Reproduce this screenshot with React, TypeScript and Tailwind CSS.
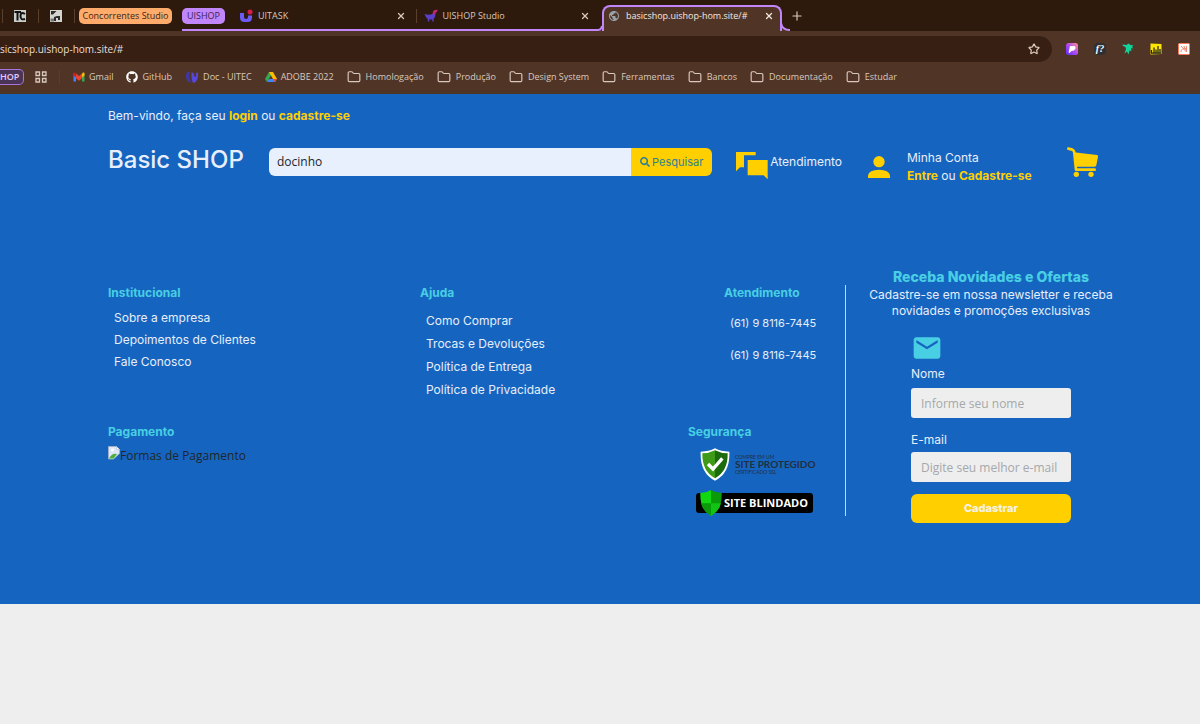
import React, { useState } from 'react'
import { MdEmail, MdPublic } from 'react-icons/md'
import { FaGithub, FaSearch } from 'react-icons/fa'
import { Folder, Plus, Star, X } from 'lucide-react'

const folders = [
  'Homologação',
  'Produção',
  'Design System',
  'Ferramentas',
  'Bancos',
  'Documentação',
  'Estudar'
]

const institutional = ['Sobre a empresa', 'Depoimentos de Clientes', 'Fale Conosco']

const help = ['Como Comprar', 'Trocas e Devoluções', 'Política de Entrega', 'Política de Privacidade']

const phones = ['(61) 9 8116-7445', '(61) 9 8116-7445']

const Separator = () => <span className="h-3.5 w-px shrink-0 bg-[#5a3f2f]" />

const GmailIcon = () => (
  <svg className="h-3 w-3" viewBox="0 0 24 24">
    <path d="M1 21V5l5 4v12z" fill="#4285f4" />
    <path d="M18 21V9l5-4v16z" fill="#34a853" />
    <path d="M6 15V5l6 5 6-5v10l-6 5z" fill="#ea4335" />
    <path d="M6 15l6 5 6-5v6H6z" fill="#503527" />
    <path d="M1 5q0-3 3-2l2 2v8L1 9z" fill="#c5221f" />
    <path d="M23 5q0-3-3-2l-2 2v8l5-4z" fill="#fbbc04" />
  </svg>
)

const AppsIcon = () => (
  <svg className="ml-[11px] h-3 w-3" viewBox="0 0 24 24" fill="none" stroke="currentColor" strokeWidth="2.6">
    <path d="M2 2h7v7H2zM15 2h7v7h-7zM2 15h7v7H2zM15 15h7v7h-7z" />
  </svg>
)

const DocIcon = () => (
  <svg className="h-3.5 w-3.5" viewBox="0 0 28 28">
    <path d="M3 6q3-4 7-3-3 8 2 22Q2 24 2 13z" fill="#4136a8" />
    <path d="M13 5q4-1 5 3 0 6 3 6 2-1 1-8l4-1q2 17-9 21-5-4-4-21z" fill="#5648dc" />
  </svg>
)

const DriveIcon = () => (
  <svg className="h-3 w-3" viewBox="0 0 24 24">
    <path d="M8 2h8l-4 7-8 13-4-6z" fill="#34a853" />
    <path d="M8 2h8l8 14h-8z" fill="#fbbc04" />
    <path d="M8 16h16l-4 6H4z" fill="#4285f4" />
    <path d="M16 16h8l-4 6z" fill="#ea4335" />
  </svg>
)

const TaskIcon = () => (
  <svg className="h-3.5 w-3.5" viewBox="0 0 28 28">
    <path d="M2 8h8v8q0 4 4 4t4-4v-3h8v4q0 9-9 9h-6q-9 0-9-9z" fill="#6c5cf5" />
    <circle cx="22" cy="6" r="5" fill="#d81b4a" />
  </svg>
)

const StudioIcon = () => (
  <svg className="h-3.5 w-3.5" viewBox="0 0 28 28">
    <path d="M1 10q9 3 16 0l3-6h4l-2 12q-3 6-9 5Q5 22 1 10z" fill="#5b3fc8" />
    <path d="M19 3l8-2-1 5-4 1-1 5-4-2z" fill="#c2276f" />
    <path d="M9 20v5M18 20v5" stroke="#5b3fc8" strokeWidth="3" />
  </svg>
)

const ChatIcon = () => (
  <svg className="h-7 w-8 shrink-0" viewBox="0 0 96 84" fill="#ffcf00">
    <path d="M0 0h59v10H24v36H12L0 58z" />
    <path d="M35 24h60v58L83 70H35z" />
  </svg>
)

const PersonIcon = () => (
  <svg className="h-[22px] w-[22px] shrink-0" viewBox="0 0 66 66" fill="#ffcf00">
    <circle cx="33" cy="17" r="17" />
    <path d="M0 66V58Q3 42 33 41q30 1 33 17v8z" />
  </svg>
)

const CartIcon = () => (
  <svg className="h-[30px] w-8" viewBox="0 0 96 90" fill="#ffcf00">
    <path d="M4 5l12 3q6 2 6 10l5 50h56" fill="none" stroke="#ffcf00" strokeWidth="8" strokeLinecap="round" strokeLinejoin="round" />
    <path d="M20 16l70 8q4 1 3 5l-5 26q-1 4-5 4H26z" />
    <circle cx="28" cy="82" r="8" />
    <circle cx="72" cy="82" r="8" />
  </svg>
)

const BrokenImageIcon = () => (
  <svg className="h-3.5 w-3 shrink-0" viewBox="0 0 24 28">
    <path d="M1 1h16l6 6v8L11 26H1z" fill="#dce6f7" stroke="#a9b4c4" strokeWidth="1.5" />
    <path d="M17 1v6h6z" fill="#fff" stroke="#a9b4c4" />
    <circle cx="9" cy="8" r="3" fill="#fff" />
    <path d="M2 25q6-12 16-9l-7 9z" fill="#4caf3a" />
  </svg>
)

const ProtectedShield = () => (
  <svg className="h-[33px] w-[30px] shrink-0" viewBox="0 0 90 99">
    <path d="M45 1q18 10 43 10 3 64-43 87Q-1 75 2 11 27 11 45 1z" fill="#fff" />
    <path d="M45 7q17 9 38 9 1 54-38 75z" fill="#1c6b0c" />
    <path d="M45 7Q28 16 7 16q-1 54 38 75z" fill="#3f9a17" />
    <path d="M24 48l15 15 28-32" fill="none" stroke="#fff" strokeWidth="10" />
  </svg>
)

const GreenShield = () => (
  <svg className="h-[26px] w-[22px] shrink-0" viewBox="0 0 66 78">
    <path d="M33 0q14 9 32 9 2 49-32 69z" fill="#0a9a0a" />
    <path d="M33 0Q19 9 1 9q-2 49 32 69z" fill="#12d812" />
    <path d="M33 40h30Q57 64 33 78z" fill="#12c412" />
    <path d="M33 40H3Q9 64 33 78z" fill="#0a9a0a" />
  </svg>
)

const BrowserChrome = () => (
  <div className="bg-[#503527] font-['Open_Sans',sans-serif] text-[9px] text-[#d9c8bd]">
    {/* Tabs */}
    <div className="flex h-[31px] items-end overflow-hidden bg-[#2d1a0d] whitespace-nowrap">
      <div className="flex h-full shrink-0 items-center pl-0.5">
        <Separator />
        <svg className="ml-[11px] h-3 w-3" viewBox="0 0 24 24">
          <path d="M0 0h24v24H0z" fill="#c9cdcb" />
          <path d="M1 4h13M7 4v17M22 8q-9-5-9 4t9 6" fill="none" stroke="#111" strokeWidth="4" />
        </svg>
        <span className="w-3" />
        <Separator />
        <svg className="ml-[11px] h-3 w-3" viewBox="0 0 24 24">
          <path d="M0 0h24v24H0z" fill="#d5d3cf" />
          <path d="M2 2h11l-7 7H2zM14 12h6v8h-4v-4h-4v6H8v-8z" fill="#2b2b2b" />
          <path d="M1 17h7v6H1z" fill="#777" />
        </svg>
        <span className="w-3" />
        <Separator />
        <button className="ml-1 h-4 w-[93px] rounded-[5px] bg-[#ffab6b] leading-4 text-[#3d2412]">
          Concorrentes Studio
        </button>
        <span className="w-2.5" />
      </div>
      <div className="flex h-full w-[416px] shrink-0 items-center border-b-2 border-[#c286fb] pt-0.5">
        <button className="h-4 w-[43px] rounded-[5px] bg-[#c286fb] leading-4 text-[#3b2350]">UISHOP</button>
        <div className="ml-3.5 flex flex-1 items-center gap-[5px]">
          <TaskIcon />
          <span className="flex-1">UITASK</span>
          <button aria-label="Fechar UITASK"><X className="h-2.5 w-2.5" strokeWidth={3} /></button>
        </div>
        <span className="w-2.5" />
        <Separator />
        <div className="ml-[7px] flex flex-1 items-center gap-[5px] pr-2">
          <StudioIcon />
          <span className="flex-1">UISHOP Studio</span>
          <button aria-label="Fechar UISHOP Studio"><X className="h-2.5 w-2.5" strokeWidth={3} /></button>
        </div>
      </div>
      <svg className="h-2 w-1 shrink-0" viewBox="0 0 4 8">
        <path d="M0 7q4 0 4-7v8H0z" fill="#503527" />
        <path d="M0 7q3 0 4-4" fill="none" stroke="#c286fb" strokeWidth="2" />
      </svg>
      <div className="flex h-[26px] w-[180px] shrink-0 items-center gap-1.5 rounded-t-lg border-x-2 border-t-2 border-[#c286fb] bg-[#503527] pr-1.5 pb-1.5 pl-1 text-[#f3e8e0]">
        <MdPublic className="h-3 w-3 text-[#9aa3ab]" />
        <span className="flex-1">basicshop.uishop-hom.site/#</span>
        <button aria-label="Fechar aba"><X className="h-2.5 w-2.5" strokeWidth={3} /></button>
      </div>
      <svg className="h-2 w-2 shrink-0" viewBox="0 0 8 8">
        <path d="M0 0q1 7 8 7v1H0z" fill="#503527" />
        <path d="M-1 0q1 7 9 7" fill="none" stroke="#c286fb" strokeWidth="2" />
      </svg>
      <button aria-label="Nova aba" className="flex h-full items-center">
        <Plus className="h-3.5 w-3.5" />
      </button>
    </div>

    {/* Address bar */}
    <div className="flex items-center pt-[5px] pr-2.5">
      <div className="flex h-[26px] min-w-0 flex-1 items-center rounded-r-full bg-[#372013] pr-3">
        <input
          aria-label="Endereço"
          defaultValue="sicshop.uishop-hom.site/#"
          className="min-w-0 flex-1 bg-transparent text-[10px] text-[#eaded6] outline-none"
        />
        <button aria-label="Favoritar"><Star className="h-3 w-3" strokeWidth={2.5} /></button>
      </div>
      <div className="ml-3.5 flex items-center gap-4">
        <svg className="h-3 w-3" viewBox="0 0 24 24">
          <defs>
            <linearGradient id="ext" x1="0" y1="1" x2="1" y2="0">
              <stop offset="0" stopColor="#5b2bff" />
              <stop offset="0.5" stopColor="#b04bf0" />
              <stop offset="1" stopColor="#ff8f90" />
            </linearGradient>
          </defs>
          <rect width="24" height="24" rx="5" fill="url(#ext)" />
          <path d="M8 6h8q4 0 3 5l-3 4-5 1-4 4q-3-1-1-5z" fill="#fff" />
        </svg>
        <span className="h-3 w-3 rounded-sm bg-[#2f3033] text-center font-['Liberation_Serif',serif] text-[10px] leading-3 font-bold text-white italic">f?</span>
        <svg className="h-3 w-3" viewBox="0 0 24 24" fill="#12d39a">
          <path d="M1 3l8 1 4-3 4 3 6 1-3 3 3 3-5-1 1 6-4-1-2 8-3-6-5 4 3-9-1-4-5-2z" />
        </svg>
        <svg className="h-3 w-3" viewBox="0 0 24 24">
          <path d="M1 1l22 1v20L1 23z" fill="#ffe600" />
          <path d="M3 21v-7M8 21V9M12 21v-8M16 21V6M20 21v-9M2 20h20" stroke="#222" strokeWidth="2.5" />
        </svg>
        <svg className="h-3 w-3" viewBox="0 0 24 24">
          <rect x="1" y="1" width="22" height="22" rx="2" fill="#fff" stroke="#ff7a59" strokeWidth="2" />
          <path d="M6 6l11 12M17 6v12M6 18q0-8 10-6M12 6q0 6 5 6" fill="none" stroke="#e88874" strokeWidth="2" />
        </svg>
      </div>
    </div>

    {/* Bookmarks */}
    <nav className="flex h-8 items-center gap-[13px] overflow-hidden pb-0.5 whitespace-nowrap">
      <div className="flex items-center">
        <button className="h-4 w-6 rounded-r-[5px] border border-l-0 border-[#a873da] bg-[#4b3557] text-left leading-3 font-semibold text-[#e3c9ff]">HOP</button>
        <AppsIcon />
        <span className="w-3" />
        <Separator />
      </div>
      <a href="#" className="flex items-center gap-1"><GmailIcon />Gmail</a>
      <a href="#" className="flex items-center gap-1"><FaGithub className="h-3 w-3 text-white" />GitHub</a>
      <a href="#" className="flex items-center gap-1"><DocIcon />Doc - UITEC</a>
      <a href="#" className="flex items-center gap-1"><DriveIcon />ADOBE 2022</a>
      {folders.map((name) => (
        <a key={name} href="#" className="flex items-center gap-[5px]">
          <Folder className="h-3.5 w-3.5" />
          {name}
        </a>
      ))}
    </nav>
  </div>
)

const StoreHeader = () => {
  const [query, setQuery] = useState('docinho')

  return (
    <header className="pt-3 pr-[101px] pl-[108px] text-xs text-[#e8eefa]">
      <p className="leading-5">
        Bem-vindo, faça seu <a href="#" className="font-bold text-[#ffcf00]">login</a> ou{' '}
        <a href="#" className="font-bold text-[#ffcf00]">cadastre-se</a>
      </p>
      <div className="mt-[13px] flex items-center">
        <a href="#" className="w-[137px] shrink-0 pb-1 text-2xl font-medium whitespace-nowrap">Basic SHOP</a>
        <form className="ml-6 flex h-7 min-w-0 flex-1 overflow-hidden rounded-md" onSubmit={(e) => e.preventDefault()}>
          <input
            aria-label="Pesquisar produtos"
            value={query}
            onChange={(e) => setQuery(e.target.value)}
            className="min-w-0 flex-1 bg-[#e8f0fe] px-2 font-['Open_Sans',sans-serif] text-xs text-[#212529] outline-none"
          />
          <button className="flex w-[81px] items-center justify-center gap-0.5 bg-[#ffcf00] text-[11px] text-[#2f7f96]">
            <FaSearch className="h-2.5 w-2.5" />
            Pesquisar
          </button>
        </form>
        <a href="#" className="ml-6 flex items-center gap-0.5">
          <span className="pt-2"><ChatIcon /></span>
          Atendimento
        </a>
        <div className="ml-[26px] flex items-center gap-[17px] pt-2.5">
          <PersonIcon />
          <div className="w-[122px] leading-[18px] whitespace-nowrap">
            <p>Minha Conta</p>
            <p>
              <a href="#" className="font-bold text-[#ffcf00]">Entre</a> ou{' '}
              <a href="#" className="font-bold text-[#ffcf00]">Cadastre-se</a>
            </p>
          </div>
        </div>
        <a href="#" aria-label="Carrinho" className="ml-[38px]"><CartIcon /></a>
      </div>
    </header>
  )
}

const StoreFooter = () => (
  <footer className="flex pt-[82px] pr-16 pb-[81px] pl-[108px] text-xs text-[#e8eefa]">
    <div className="mt-[18px] mb-[7px] min-w-0 flex-1 border-r border-[#c4d8f2]">
      <div className="grid grid-cols-[312fr_304fr_121fr] items-start">
        <section>
          <h3 className="leading-4 font-bold text-[#48cfe3]">Institucional</h3>
          <ul className="mt-1.5 pl-1.5 leading-[22px]">
            {institutional.map((item) => <li key={item}><a href="#">{item}</a></li>)}
          </ul>
        </section>
        <section>
          <h3 className="leading-4 font-bold text-[#48cfe3]">Ajuda</h3>
          <ul className="mt-2 pl-1.5 leading-[23px]">
            {help.map((item) => <li key={item}><a href="#">{item}</a></li>)}
          </ul>
        </section>
        <section>
          <h3 className="leading-4 font-bold text-[#48cfe3]">Atendimento</h3>
          <ul className="mt-1.5 pl-1.5 text-[11px] leading-8 whitespace-nowrap">
            {phones.map((phone, index) => <li key={index}>{phone}</li>)}
          </ul>
        </section>
      </div>

      <div className="mt-[23px] flex justify-between">
        <section>
          <h3 className="leading-4 font-bold text-[#48cfe3]">Pagamento</h3>
          <p className="mt-1.5 flex font-['Open_Sans',sans-serif] text-xs leading-5 text-[#212529]">
            <BrokenImageIcon />
            Formas de Pagamento
          </p>
        </section>
        <section className="w-[157px]">
          <h3 className="leading-4 font-bold text-[#48cfe3]">Segurança</h3>
          <div className="mt-2 ml-3 flex items-center gap-[5px] text-[#212f3f]">
            <ProtectedShield />
            <div className="font-['Lato',sans-serif] whitespace-nowrap">
              <p className="text-[5px] leading-[6px]">COMPRE EM UM</p>
              <p className="text-[10px] leading-[9px] font-bold">SITE PROTEGIDO</p>
              <p className="text-[5px] leading-[6px]">CERTIFICADO SSL</p>
            </div>
          </div>
          <div className="mt-3 ml-2 flex h-5 w-[117px] items-center rounded-[3px] bg-black pl-1 font-['Open_Sans',sans-serif] text-[11px] font-bold whitespace-nowrap text-white">
            <GreenShield />
            <span className="pl-0.5">SITE BLINDADO</span>
          </div>
        </section>
      </div>
    </div>

    {/* Newsletter */}
    <aside className="w-[290px] shrink-0">
      <h2 className="text-center text-sm leading-5 font-extrabold text-[#48cfe3]">Receba Novidades e Ofertas</h2>
      <p className="mx-auto w-64 text-center leading-4">
        Cadastre-se em nossa newsletter e receba novidades e promoções exclusivas
      </p>
      <form className="mx-auto mt-[13px] flex w-40 flex-col" onSubmit={(e) => e.preventDefault()}>
        <MdEmail className="h-8 w-8 text-[#48cfe3]" />
        <label htmlFor="name" className="leading-5">Nome</label>
        <input
          id="name"
          placeholder="Informe seu nome"
          className="mt-1 h-[30px] rounded-[3px] bg-[#eee] px-2.5 font-['Open_Sans',sans-serif] text-xs text-[#212529] placeholder:text-[#a5a8ab]"
        />
        <label htmlFor="email" className="mt-3 leading-5">E-mail</label>
        <input
          id="email"
          type="email"
          placeholder="Digite seu melhor e-mail"
          className="mt-0.5 h-[30px] rounded-[3px] bg-[#eee] px-2.5 font-['Open_Sans',sans-serif] text-xs text-[#212529] placeholder:text-[#a5a8ab]"
        />
        <button className="mt-3 h-[29px] rounded-md bg-[#ffcf00] text-[11px] font-extrabold text-[#f5f2e6]">Cadastrar</button>
      </form>
    </aside>
  </footer>
)

export default function App() {
  return (
    <div className="min-h-screen bg-[#eee]">
      <BrowserChrome />
      <main className="bg-[#1565c0] font-['Inter',sans-serif]">
        <StoreHeader />
        <StoreFooter />
      </main>
    </div>
  )
}
